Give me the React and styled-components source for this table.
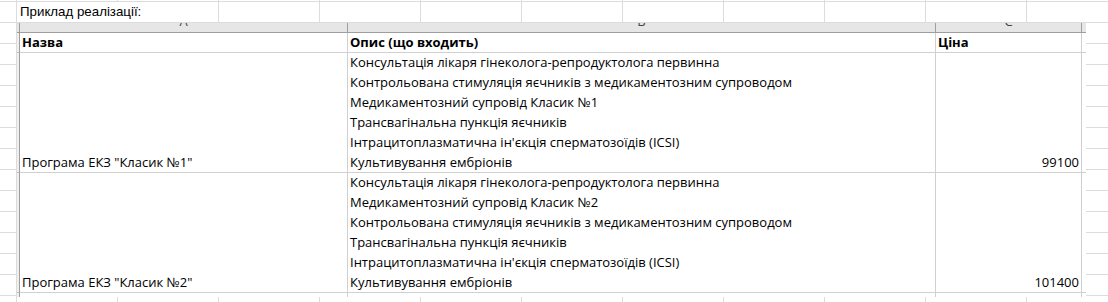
import React from 'react'
import styled, { createGlobalStyle } from 'styled-components'

const GlobalStyle = createGlobalStyle`
  html, body {
    margin: 0;
    padding: 0;
    background: #fff;
  }
`

const cellFont = `'Open Sans', 'Noto Sans', sans-serif`

const programs = [
  {
    name: 'Програма ЕКЗ "Класик №1"',
    price: 99100,
    items: [
      'Консультація лікаря гінеколога-репродуктолога первинна',
      'Контрольована стимуляція яєчників з медикаментозним супроводом',
      'Медикаментозний супровід Класик №1',
      'Трансвагінальна пункція яєчників',
      "Інтрацитоплазматична ін'єкція сперматозоїдів (ICSI)",
      'Культивування ембріонів',
    ],
  },
  {
    name: 'Програма ЕКЗ "Класик №2"',
    price: 101400,
    items: [
      'Консультація лікаря гінеколога-репродуктолога первинна',
      'Медикаментозний супровід Класик №2',
      'Контрольована стимуляція яєчників з медикаментозним супроводом',
      'Трансвагінальна пункція яєчників',
      "Інтрацитоплазматична ін'єкція сперматозоїдів (ICSI)",
      'Культивування ембріонів',
    ],
  },
]

// the worksheet behind the pasted picture
const Sheet = styled.div`
  width: 1108px;
  height: 302px;
  box-sizing: border-box;
  overflow: hidden;
  padding-top: 2px;
  background-color: #fff;
  background-image:
    linear-gradient(to right, #dcdcdc 1px, transparent 1px),
    linear-gradient(to bottom, #dcdcdc 1px, transparent 1px);
  background-size: 101px 21px;
  background-position: 16px 1px;
`

const Caption = styled.div`
  width: fit-content;
  height: 20px;
  margin-left: 17px;
  padding: 0 6px 0 3px;
  line-height: 20px;
  background: #fff;
  font-family: 'Liberation Sans', Arial, sans-serif;
  font-size: 13.3px;
  color: #000;
`

// screenshot of another sheet, pasted over the grid
const Picture = styled.div`
  width: 1069px;
  margin: 1px 0 0 17px;
  display: grid;
  grid-template-columns: 3px 328px 588px 146px 4px;
  grid-template-rows: 10px 20px 120px 120px 4px;
  background: #fff;
  font-family: ${cellFont};
  font-size: 13px;
  color: #000;
`

const HeadStrip = styled.div`
  box-sizing: border-box;
  overflow: hidden;
  display: flex;
  justify-content: center;
  align-items: flex-start;
  background: #e6e6e6;
  border-bottom: 1px solid #9e9e9e;
  border-right: ${(p) => (p.$open ? 'none' : '1px solid #9e9e9e')};
`

const Letter = styled.span`
  margin-top: -9px;
  font-size: 13px;
  line-height: 14px;
  color: #444;
`

const RowHead = styled.div`
  box-sizing: border-box;
  background: #efefef;
  border-right: 1px solid #9e9e9e;
  border-bottom: ${(p) => (p.$last ? 'none' : '1px solid #bdbdbd')};
`

const Cell = styled.div`
  box-sizing: border-box;
  display: flex;
  flex-direction: column;
  justify-content: flex-end;
  align-items: ${(p) => (p.$right ? 'flex-end' : 'flex-start')};
  padding: ${(p) => (p.$head ? '2px 2px 0' : '0 2px')};
  line-height: 20px;
  font-weight: ${(p) => (p.$head ? 700 : 400)};
  white-space: nowrap;
  border-right: ${(p) => (p.$open ? 'none' : '1px solid #d0d0d0')};
  border-bottom: ${(p) => (p.$last ? 'none' : '1px solid #d0d0d0')};
`

const Line = styled.span`
  display: block;
`

export default function App() {
  return (
    <>
      <GlobalStyle />
      <Sheet>
        <Caption>Приклад реалізації:</Caption>
        <Picture>
          <HeadStrip />
          <HeadStrip><Letter>A</Letter></HeadStrip>
          <HeadStrip><Letter>B</Letter></HeadStrip>
          <HeadStrip><Letter>C</Letter></HeadStrip>
          <HeadStrip $open />

          <RowHead />
          <Cell $head>Назва</Cell>
          <Cell $head>Опис (що входить)</Cell>
          <Cell $head>Ціна</Cell>
          <Cell $open />

          {programs.map((prog) => (
            <React.Fragment key={prog.name}>
              <RowHead />
              <Cell>{prog.name}</Cell>
              <Cell>
                {prog.items.map((item) => (
                  <Line key={item}>{item}</Line>
                ))}
              </Cell>
              <Cell $right>{prog.price}</Cell>
              <Cell $open />
            </React.Fragment>
          ))}

          <RowHead $last />
          <Cell $last />
          <Cell $last />
          <Cell $last />
          <Cell $open $last />
        </Picture>
      </Sheet>
    </>
  )
}
